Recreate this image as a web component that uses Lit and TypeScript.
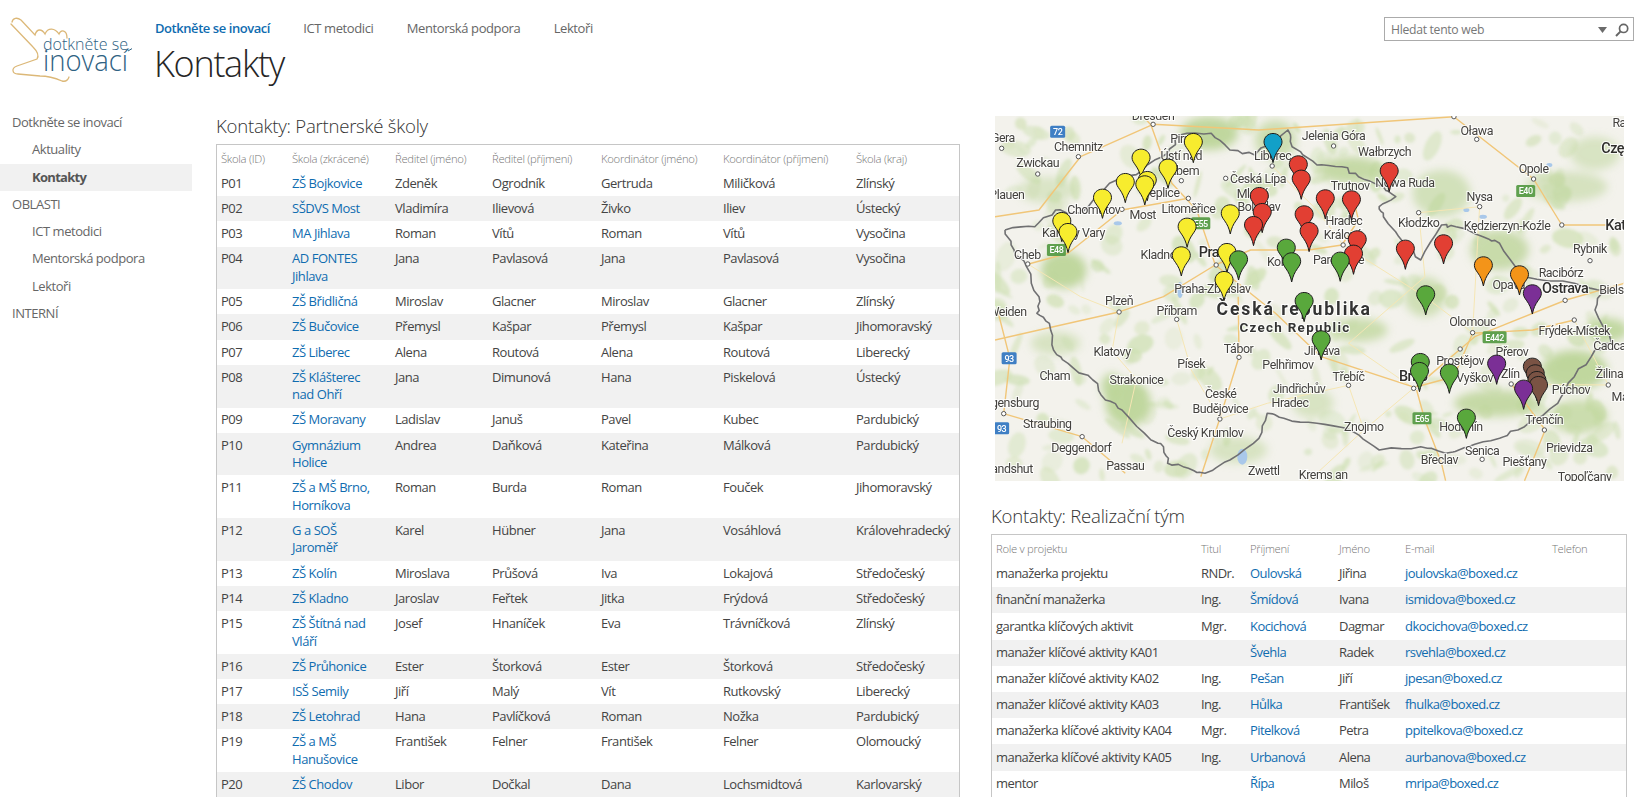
import { LitElement, html, css, svg } from "lit";
import { customElement } from "lit/decorators.js";

type P = [number, number];
const mx = (x: number) => (x - 24) / 2.41;
const my = (y: number) => (y - 18) / 3;
const line = (pts: P[]) => pts.map((p, i) => `${i ? "L" : "M"}${mx(p[0]).toFixed(1)} ${my(p[1]).toFixed(1)}`).join("");

let seed = 12345;
const rnd = () => { seed = (seed * 16807) % 2147483647; return seed / 2147483647; };
const jag = (pts: P[], amp: number): P[] => {
  const out: P[] = [];
  for (let i = 0; i < pts.length - 1; i++) {
    const [a, b] = [pts[i], pts[i + 1]];
    for (let k = 0; k < 4; k++) {
      const t = k / 4;
      const j = k === 0 ? 0 : amp;
      out.push([a[0] + (b[0] - a[0]) * t + (rnd() - .5) * j, a[1] + (b[1] - a[1]) * t + (rnd() - .5) * j]);
    }
  }
  out.push(pts[pts.length - 1]);
  return out;
};

const schools: string[][] = [
  ["P01", "ZŠ Bojkovice", "Zdeněk", "Ogrodník", "Gertruda", "Miličková", "Zlínský"],
  ["P02", "SŠDVS Most", "Vladimíra", "Ilievová", "Živko", "Iliev", "Ústecký"],
  ["P03", "MA Jihlava", "Roman", "Vítů", "Roman", "Vítů", "Vysočina"],
  ["P04", "AD FONTES\nJihlava", "Jana", "Pavlasová", "Jana", "Pavlasová", "Vysočina"],
  ["P05", "ZŠ Břidličná", "Miroslav", "Glacner", "Miroslav", "Glacner", "Zlínský"],
  ["P06", "ZŠ Bučovice", "Přemysl", "Kašpar", "Přemysl", "Kašpar", "Jihomoravský"],
  ["P07", "ZŠ Liberec", "Alena", "Routová", "Alena", "Routová", "Liberecký"],
  ["P08", "ZŠ Klášterec\nnad Ohří", "Jana", "Dimunová", "Hana", "Piskelová", "Ústecký"],
  ["P09", "ZŠ Moravany", "Ladislav", "Januš", "Pavel", "Kubec", "Pardubický"],
  ["P10", "Gymnázium\nHolice", "Andrea", "Daňková", "Kateřina", "Málková", "Pardubický"],
  ["P11", "ZŠ a MŠ Brno,\nHorníkova", "Roman", "Burda", "Roman", "Fouček", "Jihomoravský"],
  ["P12", "G a SOŠ\nJaroměř", "Karel", "Hübner", "Jana", "Vosáhlová", "Královehradecký"],
  ["P13", "ZŠ Kolín", "Miroslava", "Průšová", "Iva", "Lokajová", "Středočeský"],
  ["P14", "ZŠ Kladno", "Jaroslav", "Feřtek", "Jitka", "Frýdová", "Středočeský"],
  ["P15", "ZŠ Štítná nad\nVláří", "Josef", "Hnaníček", "Eva", "Trávníčková", "Zlínský"],
  ["P16", "ZŠ Průhonice", "Ester", "Štorková", "Ester", "Štorková", "Středočeský"],
  ["P17", "ISŠ Semily", "Jiří", "Malý", "Vít", "Rutkovský", "Liberecký"],
  ["P18", "ZŠ Letohrad", "Hana", "Pavlíčková", "Roman", "Nožka", "Pardubický"],
  ["P19", "ZŠ a MŠ\nHanušovice", "František", "Felner", "František", "Felner", "Olomoucký"],
  ["P20", "ZŠ Chodov", "Libor", "Dočkal", "Dana", "Lochsmidtová", "Karlovarský"],
];
const team: string[][] = [
  ["manažerka projektu", "RNDr.", "Oulovská", "Jiřina", "joulovska@boxed.cz"],
  ["finanční manažerka", "Ing.", "Šmídová", "Ivana", "ismidova@boxed.cz"],
  ["garantka klíčových aktivit", "Mgr.", "Kocichová", "Dagmar", "dkocichova@boxed.cz"],
  ["manažer klíčové aktivity KA01", "", "Švehla", "Radek", "rsvehla@boxed.cz"],
  ["manažer klíčové aktivity KA02", "Ing.", "Pešan", "Jiří", "jpesan@boxed.cz"],
  ["manažer klíčové aktivity KA03", "Ing.", "Hůlka", "František", "fhulka@boxed.cz"],
  ["manažerka klíčové aktivity KA04", "Mgr.", "Pitelková", "Petra", "ppitelkova@boxed.cz"],
  ["manažerka klíčové aktivity KA05", "Ing.", "Urbanová", "Alena", "aurbanova@boxed.cz"],
  ["mentor", "", "Řípa", "Miloš", "mripa@boxed.cz"],
];

const C = { y: "#f7ec2e", r: "#e23f33", g: "#59a83c", b: "#12a0c8", o: "#f39419", p: "#7b2f96", n: "#7a5344" };
const pins: [string, number, number][] = [
  ["y", 376, 205], ["y", 502, 158], ["y", 441, 235], ["y", 338, 278], ["y", 283, 325], ["y", 391, 272], ["y", 385, 285],
  ["y", 185, 395], ["y", 200, 428], ["y", 591, 372], ["y", 487, 412], ["y", 473, 498], ["y", 583, 488], ["y", 576, 572],
  ["b", 694, 158],
  ["r", 755, 225], ["r", 762, 268], ["r", 974, 245], ["r", 820, 327], ["r", 883, 330], ["r", 661, 320], ["r", 668, 368],
  ["r", 647, 407], ["r", 769, 375], ["r", 781, 425], ["r", 897, 450], ["r", 888, 493], ["r", 1013, 478], ["r", 1105, 462],
  ["g", 611, 510], ["g", 726, 475], ["g", 739, 516], ["g", 856, 514], ["g", 769, 635], ["g", 1062, 615], ["g", 810, 750],
  ["g", 1049, 818], ["g", 1047, 845], ["g", 1119, 850], ["g", 1160, 985],
  ["o", 1201, 528], ["o", 1288, 555],
  ["p", 1319, 612], ["p", 1233, 823],
  ["n", 1319, 832], ["n", 1326, 852], ["n", 1330, 872], ["n", 1334, 887], ["p", 1298, 898],
];

const labels: [string, number, number, string?, string?][] = [
  ["Gera", 72, 82, "end"], ["Dresden", 405, 15], ["Pirna", 478, 85], ["Ústí nad", 473, 135], ["Labem", 473, 180],
  ["Chemnitz", 225, 108], ["Zwickau", 127, 158], ["Plauen", 95, 252, "end"],
  ["Liberec", 693, 135], ["Jelenia Góra", 840, 75], ["Oława", 1185, 60], ["Wałbrzych", 963, 125], ["Opole", 1322, 175],
  ["Częstochowa", 1485, 115, "start", "big"], ["Radomsko", 1512, 38, "start"], ["Racibórz", 1388, 486], ["Česká Lípa", 658, 205], ["Trutnov", 880, 225],
  ["Nowa Ruda", 1012, 218], ["Nysa", 1192, 258], ["Mladá", 645, 250], ["Boleslav", 660, 288], ["Chomutov", 262, 297],
  ["Teplice", 425, 248], ["Most", 380, 312], ["Litoměřice", 490, 294], ["Karlovy Vary", 213, 367], ["Hradec", 865, 332],
  ["Králové", 862, 372], ["Kłodzko", 1045, 338], ["Kędzierzyn-Koźle", 1258, 345], ["Katowice", 1495, 345, "start", "big"],
  ["Rybnik", 1458, 415], ["Cheb", 102, 432], ["Kladno", 418, 433], ["Praha", 515, 428, "start", "big"], ["Kolín", 710, 455],
  ["Pardubice", 852, 448], ["Opava", 1262, 522], ["Ostrava", 1398, 535, "middle", "big"], ["Bielsko", 1480, 537, "start"],
  ["Praha-Zbraslav", 548, 534], ["Plzeň", 323, 572], ["Příbram", 462, 600], ["Weiden", 100, 603, "end"],
  ["Olomouc", 1175, 633], ["Frýdek-Místek", 1420, 660], ["Čadca", 1505, 705], ["Tábor", 611, 715],
  ["Klatovy", 306, 723], ["Jihlava", 812, 720], ["Přerov", 1270, 725], ["Prostějov", 1145, 750], ["Pelhřimov", 730, 762],
  ["Písek", 497, 760], ["Cham", 168, 795], ["Strakonice", 365, 807], ["Třebíč", 876, 798], ["Brno", 1032, 798, "middle", "big"],
  ["Vyškov", 1180, 802], ["Zlín", 1266, 790], ["Žilina", 1505, 790], ["Púchov", 1412, 837], ["Jindřichův", 757, 835],
  ["Hradec", 735, 876], ["České", 568, 850], ["Budějovice", 567, 895], ["Regensburg", 130, 878, "end"], ["Martin", 1510, 858, "start"],
  ["Straubing", 150, 940], ["Český Krumlov", 531, 967], ["Znojmo", 913, 948], ["Hodonín", 1147, 948], ["Trenčín", 1348, 927],
  ["Deggendorf", 232, 1012], ["Senica", 1198, 1020], ["Prievidza", 1408, 1012], ["Břeclav", 1095, 1048], ["Piešťany", 1300, 1055],
  ["Landshut", 115, 1075, "end"], ["Passau", 338, 1065], ["Zwettl", 672, 1080], ["Krems an", 815, 1092], ["Topoľčany", 1445, 1098],
  ["Česká republika", 745, 600, "middle", "country"], ["Czech Republic", 747, 652, "middle", "country2"],
];
const shields: [string, number, number, string, number][] = [
  ["72", 175, 65, "#3f7fc4", 15], ["93", 58, 745, "#3f7fc4", 15], ["93", 40, 955, "#3f7fc4", 15],
  ["E55", 520, 340, "#5fa04e", 19], ["E48", 172, 420, "#5fa04e", 19], ["E40", 1303, 243, "#5fa04e", 19],
  ["E442", 1228, 682, "#5fa04e", 24], ["E65", 1053, 925, "#5fa04e", 19],
];
const dots: P[] = [
  [405, 43], [40, 115], [225, 140], [127, 192], [1130, 20], [1185, 88], [840, 108], [692, 168], [1322, 207], [473, 212],
  [580, 205], [1192, 290], [330, 298], [490, 265], [1045, 308], [1390, 345], [1458, 452], [103, 462], [863, 405],
  [557, 465], [1398, 571], [323, 606], [462, 628], [1175, 668], [1420, 630], [1502, 825], [1268, 822], [1033, 835],
  [876, 826], [566, 927], [45, 911], [234, 980], [1348, 960], [1198, 1048], [1145, 717], [612, 742],
];
const greens: [number, number, number, number, number][] = [
  [190, 480, 55, 55, .95], [345, 880, 55, 70, .95], [305, 830, 25, 40, .9], [170, 700, 60, 35, .5], [540, 70, 70, 50, .95],
  [700, 90, 50, 60, .7], [880, 180, 80, 40, .85], [1100, 250, 70, 70, .6], [1240, 420, 70, 60, .8], [1400, 230, 100, 45, .55],
  [1470, 130, 60, 50, .5], [900, 660, 70, 35, .75], [1230, 880, 100, 40, .85], [1420, 780, 80, 60, .95], [1430, 920, 70, 50, .75],
  [1060, 560, 50, 60, .65], [1500, 660, 50, 35, .9], [610, 1020, 70, 40, .5], [150, 240, 70, 40, .45], [790, 880, 50, 45, .5],
];
const border: P[] = [
  [48, 360], [70, 420], [100, 470], [130, 560], [125, 610], [155, 640], [165, 720], [200, 760], [260, 810], [290, 870], [330, 900],
  [400, 990], [430, 1010], [440, 1060], [490, 1075], [530, 1090], [590, 1050], [660, 985], [680, 910], [720, 925], [800, 940],
  [880, 960], [950, 1020], [1050, 1010], [1110, 1030], [1165, 1010], [1240, 985], [1300, 950], [1380, 880], [1420, 800], [1470, 720],
  [1510, 700], [1470, 600], [1490, 540], [1420, 520], [1300, 500], [1240, 400], [1200, 380], [1135, 350], [1100, 345], [1050, 450],
  [1010, 400], [960, 320], [950, 290], [990, 260], [960, 230], [900, 200], [860, 170], [800, 165], [740, 110], [730, 60], [650, 135],
  [590, 120], [545, 70], [470, 75], [440, 130], [380, 180], [300, 220], [230, 310], [170, 300], [120, 350], [48, 360],
];
const roads: P[][] = [
  [[555, 465], [430, 560], [325, 605], [130, 660], [24, 690]],
  [[555, 465], [700, 610], [810, 740], [1030, 830]],
  [[555, 465], [640, 420], [780, 420], [860, 405], [900, 330], [880, 230]],
  [[555, 465], [510, 300], [450, 220], [400, 45], [380, 18]],
  [[1040, 830], [1180, 680], [1400, 570], [1540, 520]],
  [[610, 560], [612, 740], [566, 925], [520, 1100]],
  [[1040, 840], [1060, 930], [1100, 1060], [1110, 1112]],
  [[1175, 670], [1130, 800], [1040, 830]],
  [[1175, 670], [1320, 660], [1420, 630]],
  [[24, 320], [130, 300], [230, 140], [405, 43], [660, 60], [1130, 20]],
  [[1130, 20], [1322, 207], [1390, 345], [1500, 345]],
  [[1270, 825], [1350, 960], [1300, 1112]],
  [[105, 462], [200, 430], [330, 300], [490, 265]],
  [[45, 911], [60, 745], [30, 600]],
  [[45, 911], [234, 980], [338, 1090]],
];
const lanes: P[][] = [
  [[103, 462], [230, 560], [323, 606], [306, 723], [365, 807], [330, 1000]],
  [[462, 628], [497, 780], [566, 927], [680, 880], [876, 826], [913, 960]],
  [[1033, 835], [876, 700], [1060, 500], [1045, 308]],
  [[1175, 668], [1192, 290], [1045, 308]],
  [[1268, 822], [1502, 825], [1420, 630]],
  [[780, 1112], [913, 960], [1145, 717]],
  [[692, 168], [800, 300], [863, 405], [1060, 560], [1175, 668]],
];
const mottle = Array.from({ length: 340 }, () => ({
  x: rnd() * 629, y: rnd() * 365, rx: 3 + rnd() * 13, ry: 2 + rnd() * 8, o: .25 + rnd() * .5, a: rnd() * 180,
}));
const borderJag = jag(border, 10);
const lakes: [number, number, number, number][] = [[470, 540, 3, 8], [320, 340, 4, 2], [620, 1040, 5, 8], [1200, 320, 4, 2], [1160, 300, 3, 2], [1360, 165, 3, 2]];

const pinPath = "M0 0C-1.2-6-3-9.5-5.6-13.2C-7.6-16-9-18-9-20.6C-9-25.6-5-29.2 0-29.2C5-29.2 9-25.6 9-20.6C9-18 7.6-16 5.6-13.2C3-9.5 1.2-6 0 0Z";

@customElement("cz-map")
class CzMap extends LitElement {
  static styles = css`
    :host { display: block; width: 629px; height: 365px; overflow: hidden; }
    svg { display: block; }
    .land { fill: #f3f2ec; }
    .road { fill: none; stroke: #f1c678; stroke-width: 1.4; stroke-linejoin: round; }
    .lane { fill: none; stroke: #f5e6b4; stroke-width: 1; stroke-linejoin: round; }
    .border { fill: none; stroke: #707072; stroke-width: 1.6; stroke-linejoin: round; }
    .dot { fill: #fff; stroke: #555; stroke-width: 1; }
    .lbl { font: 400 12.4px Roboto, "Liberation Sans", sans-serif; fill: #44423f; stroke: #fff; stroke-width: 2.2px; stroke-opacity: .8; paint-order: stroke; }
    .big { font-size: 14.4px; font-weight: 500; fill: #2f2e2c; }
    .country { font-size: 17.6px; font-weight: 700; letter-spacing: 1.9px; fill: #333; }
    .country2 { font-size: 13.4px; font-weight: 700; letter-spacing: 1.3px; fill: #333; }
    .shield { font: 500 9px Roboto, "Liberation Sans", sans-serif; fill: #fff; stroke: none; }
    .pin { stroke: #1c1c1c; stroke-width: 1; }
  `;
  render() {
    return html`<svg width="629" height="365" viewBox="0 0 629 365">
      ${svg`
        <defs>
          <filter id="soft" x="-40%" y="-40%" width="180%" height="180%"><feGaussianBlur stdDeviation="4"></feGaussianBlur></filter>
          <filter id="mott" x="0" y="0" width="100%" height="100%"><feGaussianBlur stdDeviation="1.6"></feGaussianBlur></filter>
        </defs>
        <rect class="land" width="629" height="365"></rect>
        <g filter="url(#mott)">
          ${mottle.map(m => svg`<ellipse cx=${m.x} cy=${m.y} rx=${m.rx} ry=${m.ry} fill="#cfe0b4" opacity=${m.o} transform="rotate(${m.a} ${m.x} ${m.y})"></ellipse>`)}
        </g>
        <g filter="url(#soft)">
          ${greens.map(g => svg`<ellipse cx=${mx(g[0])} cy=${my(g[1])} rx=${g[2] / 2.41} ry=${g[3] / 3} fill="#bdd59a" opacity=${g[4]}></ellipse>`)}
        </g>
        ${lakes.map(l => svg`<ellipse cx=${mx(l[0])} cy=${my(l[1])} rx=${l[2]} ry=${l[3]} fill="#a9c8ea"></ellipse>`)}
        ${lanes.map(r => svg`<path class="lane" d=${line(r)}></path>`)}
        ${roads.map(r => svg`<path class="road" d=${line(r)}></path>`)}
        <path class="border" d=${line(borderJag)}></path>
        ${dots.map(d => svg`<circle class="dot" cx=${mx(d[0])} cy=${my(d[1])} r="2.2"></circle>`)}
        ${shields.map(s => svg`
          <rect x=${mx(s[1]) - s[4] / 2} y=${my(s[2]) - 6} width=${s[4]} height="12" rx="1.5" fill=${s[3]}></rect>
          <text class="shield" x=${mx(s[1])} y=${my(s[2]) + 3.3} text-anchor="middle">${s[0]}</text>`)}
        ${labels.map(l => svg`<text class="lbl ${l[4] || ""}" x=${mx(l[1])} y=${my(l[2]) + 4.5} text-anchor=${l[3] || "middle"}>${l[0]}</text>`)}
        ${pins.map(p => svg`<path class="pin" d=${pinPath} transform="translate(${mx(p[1])} ${my(p[2])})" fill=${(C as any)[p[0]]}></path>`)}
      `}
    </svg>`;
  }
}

@customElement("app-root")
class AppRoot extends LitElement {
  static styles = css`
    :host {
      display: block; width: 1635px; height: 797px; overflow: hidden; background: #fff; color: #444;
      font: 13px "Open Sans", "Noto Sans", sans-serif; letter-spacing: -.45px;
    }
    a { color: #0f6cb0; text-decoration: none; white-space: pre-line; }
    .top { display: flex; height: 110px; }
    .logo { flex: none; width: 154px; padding-top: 14px; }
    .logo svg { display: block; }
    .logo-t1 { font: 300 17px "Open Sans", sans-serif; fill: #2f6283; letter-spacing: 0; }
    .logo-t2 { font: 300 29px "Open Sans", sans-serif; fill: #2f6283; letter-spacing: 0; }
    .heading { flex: 1; padding-top: 18px; }
    .nav { display: flex; height: 20px; line-height: 20px; font-size: 13px; color: #666; padding-left: 1px; letter-spacing: -.4px; }
    .nav span { margin-right: 33.3px; }
    .nav .on { color: #0f6cb0; font-weight: 600; letter-spacing: -.44px; }
    h1 { margin: 3px 0 0; font: 300 36px/46px "Open Sans", sans-serif; letter-spacing: -1.3px; color: #262626; }
    .search {
      flex: none; box-sizing: border-box; width: 250px; height: 24px; margin: 17px 1px 0 0; border: 1px solid #ababab;
      display: flex; align-items: center; padding: 1px 4px 0 6px; font-size: 12.2px; color: #777; letter-spacing: -.3px;
    }
    .search span { flex: 1; }
    .search svg { display: block; margin-left: 8px; }
    .main { display: flex; }
    .side { flex: none; width: 192px; margin-top: -1px; font-size: 13px; color: #666; letter-spacing: -.45px; }
    .side div { height: 27.3px; line-height: 27.3px; padding-left: 12px; }
    .side .sub { padding-left: 32px; }
    .side .sel { background: #f1f1f1; font-weight: 700; color: #555; letter-spacing: -.7px; }
    .left { flex: none; width: 744px; margin: 6px 31px 0 24px; }
    .right { flex: none; width: 636px; padding-top: 6px; }
    .map { margin: 0 0 22px 4px; }
    h2 { margin: 0; font: 300 18.6px/20px "Open Sans", sans-serif; letter-spacing: -.25px; color: #333; height: 28px; }
    .right h2 { height: 31px; line-height: 25px; }
    table { border-collapse: separate; border-spacing: 0; table-layout: fixed; border: 1px solid #c6c6c6; width: 100%; box-sizing: border-box; }
    th { font-weight: 300; font-size: 11.3px; color: #777; text-align: left; padding: 0 4px; height: 26px; letter-spacing: -.3px; white-space: nowrap; }
    td { padding: 3.9px 4px 3.8px; line-height: 17.5px; vertical-align: top; font-size: 13px; }
    tbody tr:nth-child(even) td { background: #f1f1f1; }
    .team td { padding: 4.3px 4px 4.4px; white-space: nowrap; letter-spacing: -.55px; }
  `;
  render() {
    return html`
      <div class="top">
        <div class="logo">
          <svg width="132" height="74" viewBox="0 0 132 74" fill="none">
            <path d="M12 8C13 4 17 3 21 6L35 21C37 14 42 15 45 20C48 13 55 14 59 20C61 15 67 16 67 24M11 10L33 33C38 38 39 42 37 45L17 52C11 54 12 60 18 60L40 62C48 62 55 64 62 67C66 68 68 66 69 63" stroke="#dcb878" stroke-width="1.3" stroke-linecap="round"></path>
            <text class="logo-t1" x="43" y="36" textLength="85" lengthAdjust="spacingAndGlyphs">dotkněte se</text>
            <text class="logo-t2" x="43" y="57" textLength="85" lengthAdjust="spacingAndGlyphs">inovací</text>
            <path d="M128 37L133 34" stroke="#2f6283" stroke-width="1"></path>
          </svg>
        </div>
        <div class="heading">
          <div class="nav">
            <span class="on">Dotkněte se inovací</span><span>ICT metodici</span><span>Mentorská podpora</span><span>Lektoři</span>
          </div>
          <h1>Kontakty</h1>
        </div>
        <div class="search">
          <span>Hledat tento web</span>
          <svg width="9" height="6" viewBox="0 0 9 6"><path d="M0 0H9L4.5 6Z" fill="#6b6b6b"></path></svg>
          <svg width="14" height="14" viewBox="0 0 14 14" fill="none"><circle cx="8.6" cy="5.4" r="4.1" stroke="#666" stroke-width="1.7"></circle><path d="M5.6 8.4L1 13" stroke="#666" stroke-width="2"></path></svg>
        </div>
      </div>
      <div class="main">
        <nav class="side">
          <div>Dotkněte se inovací</div>
          <div class="sub">Aktuality</div>
          <div class="sub sel">Kontakty</div>
          <div>OBLASTI</div>
          <div class="sub">ICT metodici</div>
          <div class="sub">Mentorská podpora</div>
          <div class="sub">Lektoři</div>
          <div>INTERNÍ</div>
        </nav>
        <section class="left">
          <h2>Kontakty: Partnerské školy</h2>
          <table>
            <colgroup><col style="width:71px"><col style="width:103px"><col style="width:97px"><col style="width:109px"><col style="width:122px"><col style="width:133px"><col></colgroup>
            <thead><tr>${["Škola (ID)", "Škola (zkrácené)", "Ředitel (jméno)", "Ředitel (příjmení)", "Koordinátor (jméno)", "Koordinátor (příjmení)", "Škola (kraj)"].map(h => html`<th>${h}</th>`)}</tr></thead>
            <tbody>${schools.map(r => html`<tr>${r.map((c, i) => html`<td>${i === 1 ? html`<a>${c}</a>` : c}</td>`)}</tr>`)}</tbody>
          </table>
        </section>
        <section class="right">
          <div class="map"><cz-map></cz-map></div>
          <h2>Kontakty: Realizační tým</h2>
          <table class="team">
            <colgroup><col style="width:205px"><col style="width:49px"><col style="width:89px"><col style="width:66px"><col style="width:147px"><col></colgroup>
            <thead><tr>${["Role v projektu", "Titul", "Příjmení", "Jméno", "E-mail", "Telefon"].map(h => html`<th>${h}</th>`)}</tr></thead>
            <tbody>${team.map(r => html`<tr><td>${r[0]}</td><td>${r[1]}</td><td><a>${r[2]}</a></td><td>${r[3]}</td><td><a>${r[4]}</a></td><td></td></tr>`)}<tr><td></td><td></td><td></td><td></td><td></td><td></td></tr></tbody>
          </table>
        </section>
      </div>
    `;
  }
}
